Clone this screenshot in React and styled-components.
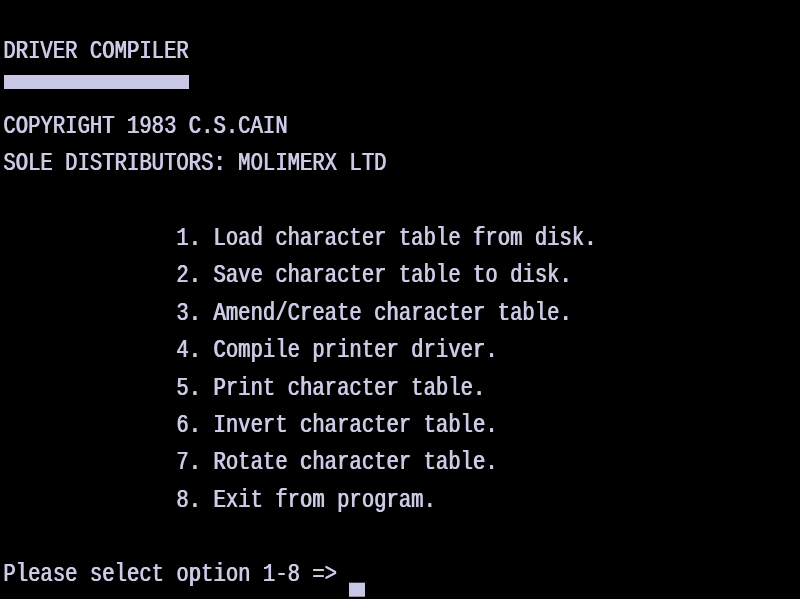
import React from 'react';
import styled, { createGlobalStyle } from 'styled-components';

const GlobalStyle = createGlobalStyle`
  html, body {
    margin: 0;
    padding: 0;
    background: #000;
  }
`;

const Screen = styled.div`
  box-sizing: border-box;
  width: 800px;
  height: 599px;
  overflow: hidden;
  padding: 33px 0 0 3px;
  background: #000;
  color: #cbcbe6;
  font-family: 'Liberation Mono', 'DejaVu Sans Mono', monospace;
  font-size: 20.6px;
  text-shadow: 0.8px 0 0 #cbcbe6;
  filter: blur(0.45px);
`;

const Line = styled.div`
  height: 37.4px;
  line-height: 37.4px;
  white-space: pre;
  padding-left: ${p => (p.indent || 0)}ch;
  transform: scaleY(1.22);
  transform-origin: 0 50%;
`;

const Bar = styled.div`
  width: 15ch;
  height: 14px;
  margin: 5px 0 18.4px 1px;
  background: #c8c8e6;
`;

const Cursor = styled.span`
  display: inline-block;
  width: 16px;
  height: 14px;
  margin-left: 1ch;
  background: #c8c8e6;
  vertical-align: -14px;
  transform: scaleY(0.82);
`;

const menu = [
  'Load character table from disk.',
  'Save character table to disk.',
  'Amend/Create character table.',
  'Compile printer driver.',
  'Print character table.',
  'Invert character table.',
  'Rotate character table.',
  'Exit from program.',
];

const App = () => (
  <>
    <GlobalStyle />
    <Screen>
      <Line>DRIVER COMPILER</Line>
      <Bar />
      <Line>COPYRIGHT 1983 C.S.CAIN</Line>
      <Line>SOLE DISTRIBUTORS: MOLIMERX LTD</Line>
      <Line />
      {menu.map((item, i) => (
        <Line key={i} indent={14}>{`${i + 1}. ${item}`}</Line>
      ))}
      <Line />
      <Line>
        Please select option 1-8 =&gt;
        <Cursor />
      </Line>
    </Screen>
  </>
);

export default App;
